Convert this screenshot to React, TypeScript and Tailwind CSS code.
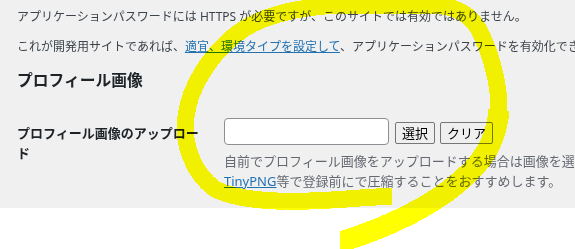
import React from "react";

export default function App() {
  return (
    <div className="relative w-[575px] h-[249px] overflow-hidden bg-white font-['Noto_Sans','Noto_Sans_CJK_JP',sans-serif]">
      <div className="bg-[#f0f0f1] pl-[17px] pt-[8px] pb-[17px] flex flex-col">
        <p className="text-[12px] leading-[18px] text-[#3c434a] whitespace-nowrap">
          アプリケーションパスワードには HTTPS が必要ですが、このサイトでは有効ではありません。
        </p>
        <p className="mt-[12px] text-[12px] leading-[18px] text-[#3c434a] whitespace-nowrap">
          これが開発用サイトであれば、
          <a href="#" className="text-[#2271b1] underline">
            適宜、環境タイプを設定して
          </a>
          、アプリケーションパスワードを有効化できます。
        </p>
        <h2 className="mt-[14px] text-[15.75px] leading-[20px] font-bold text-[#1d2327]">
          プロフィール画像
        </h2>
        <div className="mt-[28px] flex">
          <div className="w-[207px] shrink-0 pt-[5px]">
            <div className="w-[186px] text-[13px] leading-[20px] font-semibold text-[#1d2327]">
              プロフィール画像のアップロード
            </div>
          </div>
          <div className="flex flex-col">
            <div className="flex items-start">
              <input
                type="text"
                className="w-[165px] h-[27px] bg-white border border-[#8c8f94] rounded-[4px] outline-none"
              />
              <button className="ml-[6px] mt-[4px] w-[40px] h-[22px] bg-[#efefef] border border-[#767676] rounded-[2px] text-[13px] leading-none text-black">
                選択
              </button>
              <button className="ml-[5px] mt-[4px] w-[53px] h-[22px] bg-[#efefef] border border-[#767676] rounded-[2px] text-[13px] leading-none text-black">
                クリア
              </button>
            </div>
            <p className="mt-[6px] text-[13px] leading-[20px] text-[#646970] whitespace-nowrap">
              自前でプロフィール画像をアップロードする場合は画像を選択し、
              <br />
              <a href="#" className="text-[#2271b1] underline">
                TinyPNG
              </a>
              等で登録前にで圧縮することをおすすめします。
            </p>
          </div>
        </div>
      </div>
      <svg
        className="absolute inset-0 pointer-events-none mix-blend-multiply"
        width="575"
        height="249"
        viewBox="0 0 575 249"
        shapeRendering="crispEdges"
      >
        <defs>
          <clipPath id="tailclip">
            <rect x="340" y="0" width="235" height="249" />
          </clipPath>
        </defs>
        <path
          d="M392,196 L360,198 C300,203 245,204 215,189 C192,172 182,142 186,116 C190,86 210,56 234,36 C258,16 296,7 340,5 L430,5 C452,5 468,12 478,28 C490,50 499,82 499,108 C499,118 498,124 497,128"
          fill="none"
          stroke="#ffff00"
          strokeWidth="17"
          strokeLinejoin="round"
        />
        <path
          d="M499,110 C497,135 488,155 470,172 C452,190 430,205 400,219 C380,229 355,238 320,248"
          fill="none"
          stroke="#ffff00"
          strokeWidth="21"
          strokeLinejoin="round"
          clipPath="url(#tailclip)"
        />
      </svg>
    </div>
  );
}
